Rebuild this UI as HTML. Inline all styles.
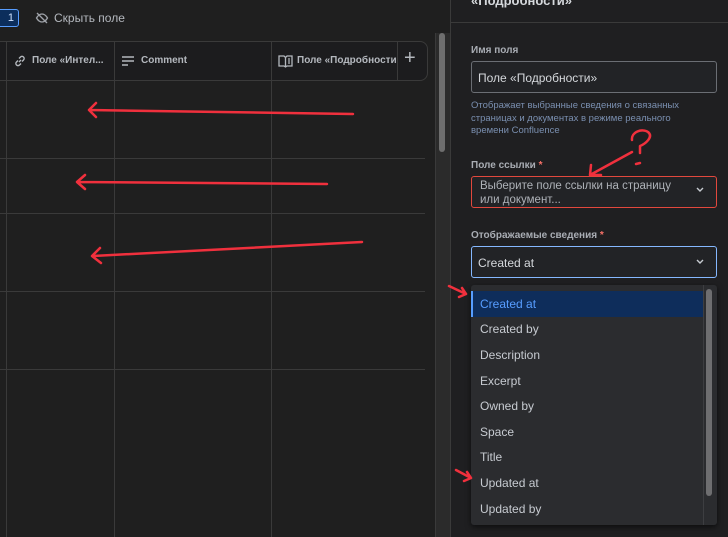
<!DOCTYPE html>
<html><head><meta charset="utf-8"><style>
*{box-sizing:border-box;margin:0;padding:0}
body{width:728px;height:537px;overflow:hidden;background:#1f1f1f;font-family:"Liberation Sans","Noto Sans CJK SC",sans-serif;position:relative;color:#c7cbd1}
.a{position:absolute}
.vl{position:absolute;width:1px;background:#3a3a3a}
.hl{position:absolute;height:1px;background:#3a3a3a}
.lbl{font-size:10px;font-weight:bold;color:#a9adb4}
.inp{position:absolute;left:471px;width:246px;border:1px solid #6b6e74;border-radius:3px;background:#222326;font-size:12px;color:#d5d8dc}
.opt{position:absolute;left:471px;width:232px;height:26px;font-size:12px;color:#c7cbd1;padding-left:9px;line-height:26px}
</style></head><body>
<!-- top bar -->
<div class="a" style="left:-4px;top:9px;width:23px;height:18px;border:1px solid #579dff;border-radius:3px;background:#0c2e5c;color:#cfe1fd;font-size:11px;line-height:16px;text-align:right;padding-right:4px">1</div>
<svg class="a" style="left:35px;top:11px" width="14" height="14" viewBox="0 0 14 14" fill="none" stroke="#9fa3a9" stroke-width="1.3"><path d="M1.5 7c1.5-2.5 3.5-4 5.5-4s4 1.5 5.5 4c-1.5 2.5-3.5 4-5.5 4S3 9.5 1.5 7z"/><path d="M2 2l10 10"/></svg>
<div class="a" style="left:54px;top:11px;font-size:12px;color:#b4b8be">Скрыть поле</div>
<!-- table header -->
<div class="a" style="left:-10px;top:41px;width:438px;height:40px;border:1px solid #3a3a3a;border-radius:0 8px 8px 0;background:#1c1c1e"></div>
<div class="vl" style="left:6px;top:41px;height:496px"></div>
<div class="vl" style="left:114px;top:41px;height:496px"></div>
<div class="vl" style="left:271px;top:41px;height:496px"></div>
<div class="vl" style="left:397px;top:41px;height:40px"></div>
<svg class="a" style="left:13px;top:54px" width="14" height="14" viewBox="0 0 14 14" fill="none" stroke="#b4b8be" stroke-width="1.4"><path d="M6 8l2-2M5 6.5L3.5 8a2 2 0 003 3L8 9.5M9 7.5L10.5 6a2 2 0 00-3-3L6 4.5"/></svg>
<div class="a lbl" style="left:32px;top:55px;color:#b4b8be">Поле «Интел...</div>
<svg class="a" style="left:121px;top:54px" width="14" height="14" viewBox="0 0 14 14" stroke="#b4b8be" stroke-width="1.4"><path d="M1 3h12M1 7h12M1 11h6"/></svg>
<div class="a lbl" style="left:141px;top:55px;color:#b4b8be">Comment</div>
<svg class="a" style="left:278px;top:54px" width="15" height="14" viewBox="0 0 15 14" fill="none" stroke="#b4b8be" stroke-width="1.3"><path d="M1 2h5l1.5 1.5L9 2h5v10H9l-1.5 1L6 12H1z M7.5 3.5V13"/><path d="M10 5h2M10 7h2M10 9h2"/></svg>
<div class="a lbl" style="left:297px;top:55px;width:100px;overflow:hidden;white-space:nowrap;color:#b4b8be">Поле «Подробности»</div>
<div class="a" style="left:404px;top:47px;font-size:20px;color:#b4b8be;font-weight:300">+</div>
<div class="hl" style="left:0;top:158px;width:425px"></div>
<div class="hl" style="left:0;top:213px;width:425px"></div>
<div class="hl" style="left:0;top:291px;width:425px"></div>
<div class="hl" style="left:0;top:369px;width:425px"></div>
<!-- scrollbar -->
<div class="a" style="left:435px;top:33px;width:15px;height:504px;background:#2b2b2b;border-left:1px solid #3a3a3a"></div>
<div class="a" style="left:439px;top:33px;width:6px;height:119px;border-radius:3px;background:#6e6e6e"></div>
<!-- panel -->
<div class="a" style="left:450px;top:0;width:278px;height:537px;background:#1f1f21;border-left:1px solid #3a3a3a"></div>
<div class="hl" style="left:451px;top:22px;width:277px;background:#3a3a3a"></div>
<div class="a" style="left:471px;top:-7px;font-size:13px;font-weight:bold;color:#d5d8dc">«Подробности»</div>
<div class="a lbl" style="left:471px;top:45px">Имя поля</div>
<div class="inp" style="top:61px;height:32px;padding:9px 6px">Поле «Подробности»</div>
<div class="a" style="left:471px;top:100px;width:240px;font-size:9.5px;line-height:12.5px;color:#7a8fb0">Отображает выбранные сведения о связанных страницах и документах в режиме реального времени Confluence</div>
<div class="a lbl" style="left:471px;top:160px">Поле ссылки <span style="color:#f87168">*</span></div>
<div class="inp" style="top:176px;height:32px;border-color:#e2483d;padding:2px 8px;font-size:11.5px;line-height:14px;color:#aeb2b8">Выберите поле ссылки на страницу<br>или документ...</div>
<div class="a lbl" style="left:471px;top:230px">Отображаемые сведения <span style="color:#f87168">*</span></div>
<div class="inp" style="top:246px;height:32px;border-color:#85b8ff;padding:9px 6px">Created at</div>
<svg class="a" style="left:696px;top:187px" width="8" height="6" viewBox="0 0 8 6" fill="none" stroke="#c7cbd1" stroke-width="1.4"><path d="M1 1l3 3 3-3"/></svg>
<svg class="a" style="left:696px;top:259px" width="8" height="6" viewBox="0 0 8 6" fill="none" stroke="#c7cbd1" stroke-width="1.4"><path d="M1 1l3 3 3-3"/></svg>
<!-- dropdown -->
<div class="a" style="left:471px;top:285px;width:246px;height:240px;background:#2b2c2f;border-radius:3px;box-shadow:0 2px 6px rgba(0,0,0,.6)"></div>
<div class="a" style="left:703px;top:285px;width:1px;height:240px;background:#3d3e41"></div>
<div class="a" style="left:706px;top:289px;width:6px;height:207px;border-radius:3px;background:#6e6e70"></div>
<div class="opt" style="top:291px;background:#0e2d5b;color:#579dff;border-left:2px solid #579dff;padding-left:7px">Created at</div>
<div class="opt" style="top:316px">Created by</div>
<div class="opt" style="top:342px">Description</div>
<div class="opt" style="top:368px">Excerpt</div>
<div class="opt" style="top:393px">Owned by</div>
<div class="opt" style="top:419px">Space</div>
<div class="opt" style="top:444px">Title</div>
<div class="opt" style="top:470px">Updated at</div>
<div class="opt" style="top:496px">Updated by</div>
<!-- red annotations -->
<svg class="a" style="left:0;top:0" width="728" height="537" fill="none" stroke="#f0303d" stroke-width="2.5" stroke-linecap="round" stroke-linejoin="round">
<path d="M353 114L89 110M96 103l-7 7 7 7"/>
<path d="M327 184L77 182M85 175l-8 7 8 7"/>
<path d="M362 242L93 256M100 248l-8 8 9 7"/>
<path d="M632 152L590 175M591 165l-1 10 11 0"/>
<path d="M632 140c-1-8 10-12 16-8 6 5-3 12-8 14 0 3 0 5 0 7M636 164l4-1"/>
<path d="M449 286L466 294M459 297l7-3-4-6"/>
<path d="M456 470L471 478M464 481l7-3-4-6"/>
</svg>
</body></html>
